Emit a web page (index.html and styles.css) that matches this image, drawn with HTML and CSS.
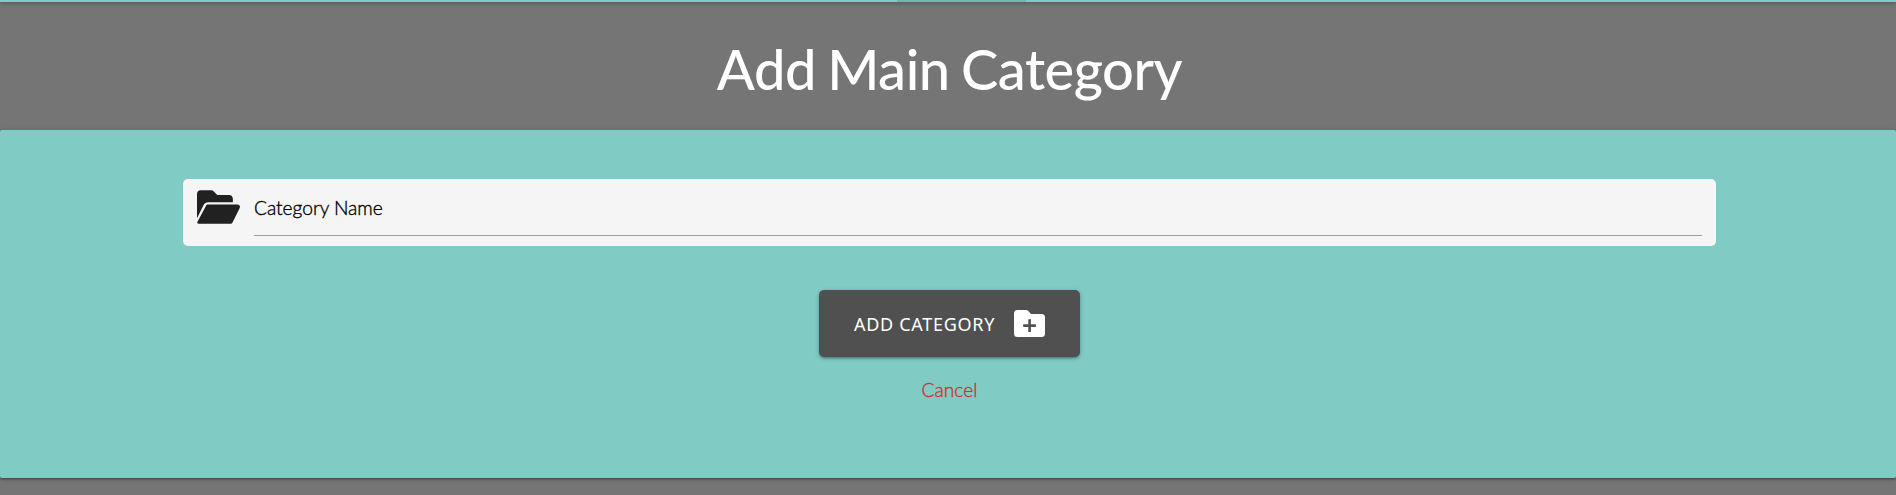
FILE: index.html
```html
<!DOCTYPE html>
<html lang="en">
<head>
<meta charset="utf-8">
<title>Add Main Category</title>
<link rel="stylesheet" href="styles.css">
</head>
<body>
<nav class="topbar"><span class="topbar-active"></span></nav>
<main>
<h1 class="title">Add Main Category</h1>
<form class="card">
<div class="field">
<svg class="folder" viewBox="0 0 576 448"><path d="M148 160H480V112C480 85 458 64 432 64H272L222 14Q208 0 190 0H48C21 0 0 21 0 48V376L90 195C101 174 123 160 148 160zM543 192H148C136 192 125 199 119 210L5 424Q-2 448 22 448H447C459 448 470 441 476 430L572 238C583 217 568 192 543 192z"/></svg>
<label class="label">Category Name</label>
</div>
<button class="submit" type="button"><span class="submit-text">Add Category</span><svg class="plus" viewBox="0 0 31 27"><path fill-rule="evenodd" d="M3.500 0H12Q13.500 0 14.500 1.200L17 4H27.500Q31 4 31 7.500V23.500Q31 27 27.500 27H3.500Q0 27 0 23.500V3.500Q0 0 3.500 0zM14.300 9.200V14.200H9.200V16.900H14.300V21.900H16.900V16.900H21.900V14.200H16.900V9.200z"/></svg></button>
<a class="cancel">Cancel</a>
</form>
</main>
</body>
</html>
```
FILE: styles.css
```css
* { box-sizing: border-box; }
body { margin: 0; height: 495px; overflow: hidden; background: #757575; font-family: Lato, sans-serif; }
.topbar { height: 2px; display: flex; padding-left: 897px; background: #80cbc4; box-shadow: 0 2px 2px 0 rgba(0,0,0,.14), 0 3px 1px -2px rgba(0,0,0,.12), 0 1px 5px 0 rgba(0,0,0,.2); }
.topbar-active { width: 129px; background: rgba(0,0,0,.1); }
.title { margin: 0; height: 128px; padding: 34px 0 0 3px; font-size: 56px; line-height: 66px; font-weight: 500; letter-spacing: -.45px; word-spacing: -2.5px; color: #fff; text-align: center; }
.card { height: 348px; padding: 49px 180px 0 183px; display: flex; flex-direction: column; align-items: center; background: #80cbc4; border-radius: 2px; box-shadow: 0 2px 2px 0 rgba(0,0,0,.14), 0 3px 1px -2px rgba(0,0,0,.12), 0 1px 5px 0 rgba(0,0,0,.2); }
.field { width: 100%; height: 67px; display: flex; align-items: flex-start; padding: 11px 14px 0; gap: 14px; background: #f5f5f5; border-radius: 5px; }
.folder { width: 43px; height: 34px; fill: #212121; }
.label { flex: 1; height: 46px; border-bottom: 1px solid #9e9e9e; font-size: 19.2px; line-height: 36px; font-weight: 300; -webkit-text-stroke: .35px #000; letter-spacing: -.03px; color: #000; }
.submit { width: 261px; height: 67px; margin-top: 44px; border: 0; border-radius: 5px; background: #505050; color: #fff; display: flex; align-items: center; padding: 0 0 0 35px; font: 18px "Noto Sans", sans-serif; text-transform: uppercase; letter-spacing: .7px; box-shadow: 0 2px 2px 0 rgba(0,0,0,.14), 0 3px 1px -2px rgba(0,0,0,.12), 0 1px 5px 0 rgba(0,0,0,.2); }
.submit-text { width: 160px; text-align: left; white-space: nowrap; }
.plus { width: 31px; height: 27px; fill: #fff; }
.cancel { margin-top: 19px; font-size: 19.2px; line-height: 28px; font-weight: 300; -webkit-text-stroke: .35px #d32f2f; color: #d32f2f; }
```
